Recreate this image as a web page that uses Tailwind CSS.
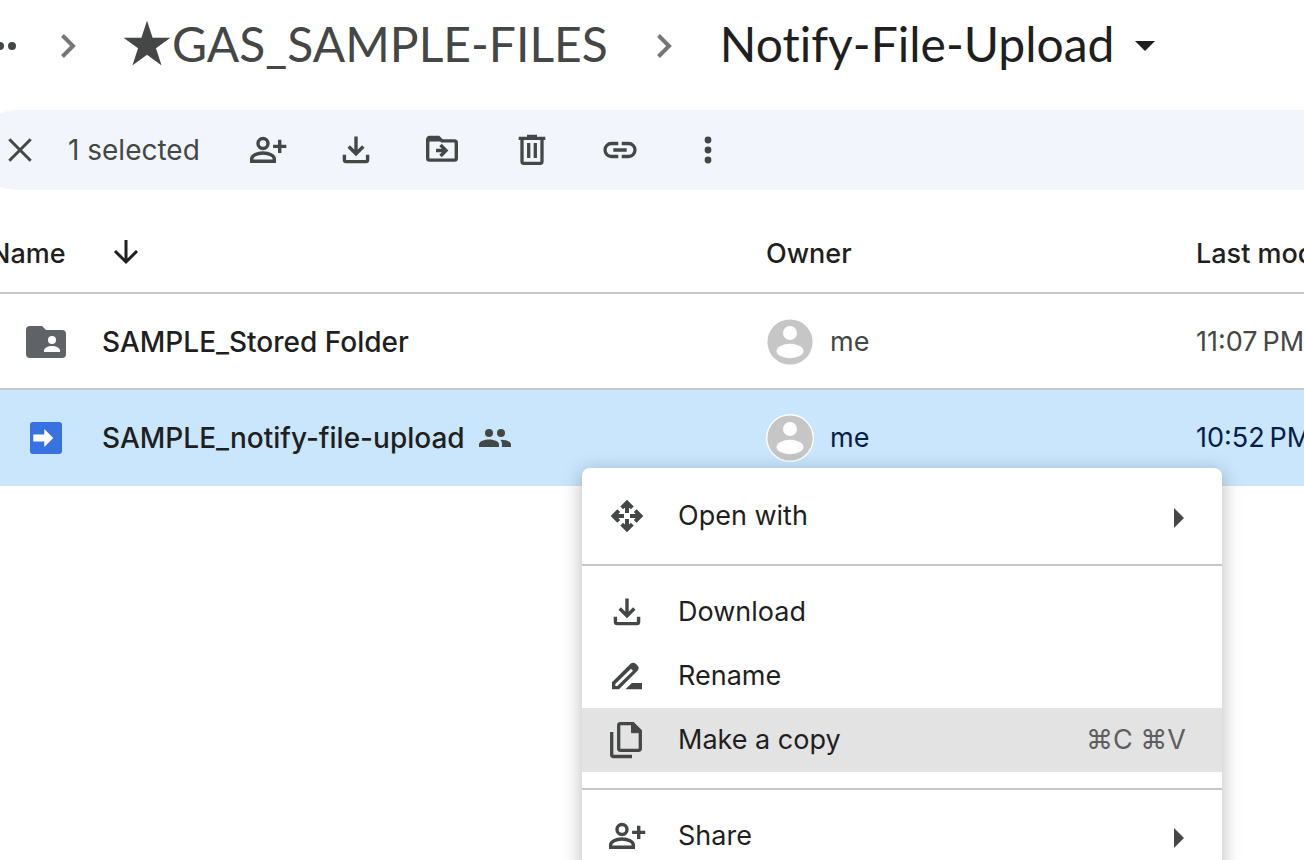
<!DOCTYPE html>
<html lang="en">
<head>
<meta charset="utf-8">
<title>Notify-File-Upload</title>
<script src="https://cdn.jsdelivr.net/npm/@tailwindcss/browser@4"></script>
</head>
<body class="h-screen overflow-hidden bg-white font-[Inter,Roboto,sans-serif] text-[27px] leading-9 text-[#1f1f1f]">

<svg class="hidden" aria-hidden="true">
  <symbol id="person-add" viewBox="0 0 40 40">
    <g fill="none" stroke="currentColor" stroke-width="3.400">
      <circle cx="15" cy="13.500" r="5"/>
      <path d="M3.700 31.300v-2.500c0-3.200 5-5.800 11.300-5.800s11.300 2.600 11.300 5.800v2.500z"/>
      <path d="M31.700 9.800v13.200M25.100 16.400h13.200"/>
    </g>
  </symbol>
  <symbol id="download" viewBox="0 0 40 40">
    <g fill="none" stroke="currentColor" stroke-width="3.400">
      <path d="M20 6.600v17M12.700 16.500l7.300 7.300 7.300-7.300"/>
      <path d="M8.400 24.800v5c0 1.100.8 1.800 1.800 1.800h19.600c1 0 1.800-.7 1.800-1.800v-5"/>
    </g>
  </symbol>
  <symbol id="avatar" viewBox="0 0 48 48">
    <circle cx="24" cy="24" r="24" fill="#fff"/>
    <circle cx="24" cy="24" r="22.6" fill="#c6c6c6"/>
    <circle cx="24" cy="15" r="7" fill="#fff"/>
    <ellipse cx="24" cy="33" rx="13.5" ry="7.2" fill="#fff"/>
  </symbol>
</svg>

<header class="flex h-[110px] items-start">
  <nav aria-label="Breadcrumb" class="flex h-[92px] items-center whitespace-nowrap font-[Lato,sans-serif] text-5xl text-[#444746] [font-variant-ligatures:none]">
    <button aria-label="Show path" class="-ml-2 mr-10 block">
      <svg class="h-6 w-7" viewBox="0 0 28 24" fill="currentColor"><circle cx="8" cy="12" r="4"/><circle cx="20" cy="12" r="4"/></svg>
    </button>
    <svg class="h-6 w-4" viewBox="0 0 16 24" fill="none" stroke="#747775" stroke-width="4"><path d="m2.500 1.500 10.500 10.500-10.500 10.500"/></svg>
    <a href="#" class="ml-[46px] block h-12 leading-[44px]"><span class="font-['Noto_Sans_CJK_JP',sans-serif] text-[50px] leading-[0]">★</span>GAS_SAMPLE-FILES</a>
    <svg class="ml-12 h-6 w-4" viewBox="0 0 16 24" fill="none" stroke="#747775" stroke-width="4"><path d="m2.500 1.500 10.500 10.500-10.500 10.500"/></svg>
    <button class="ml-12 flex h-12 items-center gap-5 text-[#1f1f1f]"><span class="h-12 leading-[44px]">Notify-File-Upload</span>
      <svg class="h-[10px] w-5" viewBox="0 0 20 10" fill="currentColor"><path d="M0 0h20L10 10z"/></svg>
    </button>
  </nav>
</header>

<div role="toolbar" aria-label="Selection actions" class="-ml-6 flex h-20 items-center rounded-l-full bg-[#f2f6fc] pl-6 text-[#444746]">
  <button aria-label="Clear selection">
    <svg class="size-10" viewBox="0 0 40 40" fill="none" stroke="currentColor" stroke-width="3"><path d="m9.300 9.300 21.400 21.400M30.700 9.300 9.300 30.700"/></svg>
  </button>
  <span class="ml-7 w-[180px] text-[28px]">1 selected</span>
  <div class="flex gap-12">
    <button aria-label="Share"><svg class="size-10"><use href="#person-add"/></svg></button>
    <button aria-label="Download"><svg class="size-10"><use href="#download"/></svg></button>
    <button aria-label="Move"><svg class="size-10" viewBox="1 0 40 40" fill="none" stroke="currentColor" stroke-width="3.400"><path d="M4.700 9.500v18.800c0 1 .8 1.800 1.800 1.800h25c1 0 1.800-.8 1.800-1.800V12.700c0-1-.8-1.800-1.800-1.800H19L15.500 7.500h-9c-1 0-1.800.8-1.800 2z"/><path d="M5 8h10.500l3 3H5z" fill="currentColor" stroke-width="1"/><path d="M13 20.500h10M17.500 15l5.500 5.500-5.500 5.500"/></svg></button>
    <button aria-label="Remove"><svg class="size-10" viewBox="0 0 40 40" fill="none" stroke="currentColor" stroke-width="3.300"><path d="M6.700 8.300h26.600M15 6.500h10"/><path d="M10 8v23.500c0 1 .8 1.800 1.800 1.800h16.400c1 0 1.800-.8 1.800-1.800V8M16.700 13v15M23.300 13v15"/></svg></button>
    <button aria-label="Copy link"><svg class="size-10" viewBox="0 0 40 40" fill="none" stroke="currentColor" stroke-width="3.300"><path d="M18.300 13.500H11.500a6.500 6.500 0 0 0 0 13h6.800M21.700 13.500h6.800a6.500 6.500 0 0 1 0 13h-6.800M13.300 20h13.400"/></svg></button>
    <button aria-label="More actions"><svg class="size-10" viewBox="0 0 40 40" fill="currentColor"><circle cx="20" cy="10" r="3.400"/><circle cx="20" cy="20" r="3.400"/><circle cx="20" cy="30" r="3.400"/></svg></button>
  </div>
</div>

<main class="mt-6 overflow-hidden">
  <table class="w-full table-fixed border-separate border-spacing-0 whitespace-nowrap text-left">
    <colgroup><col><col class="w-[430px]"><col class="w-[108px]"></colgroup>
    <thead>
      <tr class="h-20">
        <th class="border-b-2 border-[#c7c7c7] p-0 pt-0.5 font-medium"><div class="-ml-[10px] flex items-center gap-11">Name
          <button aria-label="Reverse sort direction"><svg class="block size-8" viewBox="0 0 32 32" fill="none" stroke="currentColor" stroke-width="3"><path d="M16 2v22M5 13l11 11 11-11"/></svg></button></div></th>
        <th class="border-b-2 border-[#c7c7c7] p-0 pt-0.5 font-medium">Owner</th>
        <th class="border-b-2 border-[#c7c7c7] p-0 pt-0.5 font-medium">Last modified</th>
      </tr>
    </thead>
    <tbody>
      <tr class="h-24">
        <td class="border-b-2 border-[#c7c7c7] p-0 pt-0.5 text-[28px] font-medium"><div class="flex items-center pl-[26px]">
          <svg class="mr-9 h-8 w-10" viewBox="0 0 40 32"><path fill="#5f6368" d="M4 0h12l4 4h16q4 0 4 4v20q0 4-4 4H4q-4 0-4-4V4q0-4 4-4z"/><circle cx="26" cy="14" r="4" fill="#fff"/><path fill="#fff" d="M18 26v-1.500c0-2.500 4-4.500 8-4.500s8 2 8 4.500V26z"/></svg>
          SAMPLE_Stored Folder</div></td>
        <td class="border-b-2 border-[#c7c7c7] p-0 pt-0.5 text-[#444746]"><div class="flex items-center gap-4"><svg class="size-12"><use href="#avatar"/></svg>me</div></td>
        <td class="border-b-2 border-[#c7c7c7] p-0 pt-0.5 text-[#444746]">11:07&#8239;PM</td>
      </tr>
      <tr class="h-24 bg-[#c9e6fc]">
        <td class="p-0 text-[28px] font-medium"><div class="flex items-center pl-[30px]">
          <svg class="mr-10 size-8" viewBox="0 0 32 32"><rect width="32" height="32" rx="3" fill="#3871e0"/><path fill="#fff" d="M3.300 12.500h11V7l9 9-9 9v-5.500h-11z"/></svg>
          SAMPLE_notify-file-upload
          <svg class="ml-[14px] h-[18px] w-8" role="img" aria-label="Shared" viewBox="0 0 32 18" fill="#444746"><circle cx="10" cy="4" r="4"/><circle cx="22" cy="4" r="4"/><path d="M0 18v-2.500C0 12 6 10.600 10 10.600s10 1.400 10 4.900V18zM21.500 10.700c5 0 10.500 1.400 10.500 4.800V18h-9v-2.500c0-2-.7-3.700-1.500-4.800z"/></svg></div></td>
        <td class="p-0 text-[#041e49]"><div class="flex items-center gap-4"><svg class="size-12"><use href="#avatar"/></svg>me</div></td>
        <td class="p-0 text-[#041e49]">10:52&#8239;PM</td>
      </tr>
    </tbody>
  </table>
</main>

<div role="menu" class="absolute top-[468px] left-[582px] w-[640px] rounded-lg bg-white py-4 shadow-[0_4px_20px_rgba(0,0,0,0.28)]">
  <button role="menuitem" class="flex h-16 w-full items-center pr-[38px] pl-[25px] text-left">
    <svg class="mr-[31px] size-10 shrink-0 text-[#444746]" viewBox="0 0 40 40" fill="none" stroke="currentColor" stroke-width="4"><path d="M20 17V7M14.700 11.800 20 6.500l5.300 5.300M20 23v10M14.700 28.200 20 33.500l5.300-5.300M17 20H7M11.800 14.700 6.500 20l5.300 5.300M23 20h10M28.200 14.700 33.500 20l-5.300 5.300"/></svg>
    <span class="grow">Open with</span>
    <svg class="mt-1 h-5 w-[10px] text-[#444746]" viewBox="0 0 10 20" fill="currentColor"><path d="M0 0v20l10-10z"/></svg>
  </button>
  <hr class="mt-4 mb-[14px] border-t-2 border-[#c7c7c7]">
  <button role="menuitem" class="flex h-16 w-full items-center pr-9 pl-[25px] text-left">
    <svg class="mr-[31px] size-10 shrink-0 text-[#444746]"><use href="#download"/></svg>Download
  </button>
  <button role="menuitem" class="flex h-16 w-full items-center pr-9 pl-[25px] text-left">
    <svg class="mr-[31px] size-10 shrink-0 text-[#444746]" viewBox="0 0 40 40" fill="currentColor"><path fill-rule="evenodd" d="M5 33.300v-7L23.500 7.800c1.500-1.500 3.700-1.500 5.200 0l1.800 1.800c1.500 1.500 1.500 3.700 0 5.200L12 33.300zM8.300 30h2L26 14.800l-2-2L8.300 28z"/><path d="M18.500 33.300l6.300-6.300H35v6.300z"/></svg>Rename
  </button>
  <button role="menuitem" class="flex h-16 w-full items-center bg-[#e3e3e3] pr-9 pl-[25px] text-left">
    <svg class="mr-[31px] size-10 shrink-0 text-[#444746]" viewBox="1 0 40 40" fill="none" stroke="currentColor" stroke-width="3.300"><path d="M27 3.700H14.500c-1 0-1.800.8-1.800 1.800v23c0 1 .8 1.800 1.800 1.800h18c1 0 1.800-.8 1.800-1.800V11z"/><path d="M25.500 3.700v9h9z" fill="currentColor" stroke-width="1"/><path d="M5.700 12v22.700c0 1 .8 1.800 1.800 1.800H26"/></svg>
    <span class="grow">Make a copy</span>
    <span class="text-[#5e5e5e]">⌘C ⌘V</span>
  </button>
  <hr class="mt-4 mb-[14px] border-t-2 border-[#c7c7c7]">
  <button role="menuitem" class="flex h-16 w-full items-center pr-[38px] pl-[25px] text-left">
    <svg class="mr-[31px] size-10 shrink-0 text-[#444746]"><use href="#person-add"/></svg>
    <span class="grow">Share</span>
    <svg class="mt-1 h-5 w-[10px] text-[#444746]" viewBox="0 0 10 20" fill="currentColor"><path d="M0 0v20l10-10z"/></svg>
  </button>
</div>
</body>
</html>
